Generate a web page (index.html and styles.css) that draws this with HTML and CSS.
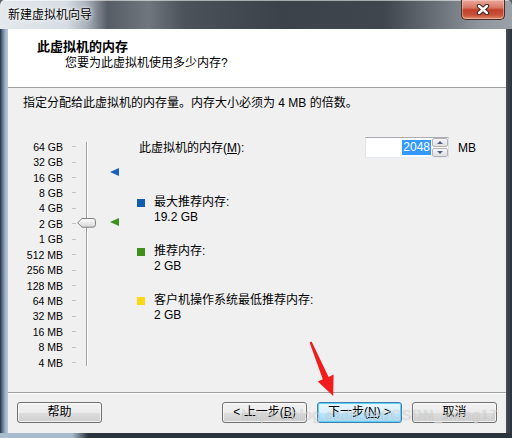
FILE: index.html
```html
<!DOCTYPE html>
<html lang="zh-CN">
<head>
<meta charset="utf-8">
<title>新建虚拟机向导</title>
<link rel="stylesheet" href="styles.css">
</head>
<body>
<div class="window">
  <div class="titlebar">
    <span class="title">新建虚拟机向导</span>
    <div class="close">
      <svg width="14" height="11" viewBox="0 0 14 11">
        <path d="M3 2 L11 9 M11 2 L3 9" stroke="#3a2420" stroke-width="4.4" stroke-linecap="round"/>
        <path d="M3 2 L11 9 M11 2 L3 9" stroke="#ffffff" stroke-width="2.4" stroke-linecap="round"/>
      </svg>
    </div>
  </div>
  <div class="client">
    <div class="header">
      <div class="h-title">此虚拟机的内存</div>
      <div class="h-sub">您要为此虚拟机使用多少内存?</div>
    </div>
    <div class="content">
      <p class="intro">指定分配给此虚拟机的内存量。内存大小必须为 4 MB 的倍数。</p>
      <div class="main">
        <div class="scale">
          <ul class="ticks">
            <li class="row"><span class="lbl">64 GB</span><i class="tick"></i></li>
            <li class="row"><span class="lbl">32 GB</span><i class="tick"></i></li>
            <li class="row"><span class="lbl">16 GB</span><i class="tick"></i></li>
            <li class="row"><span class="lbl">8 GB</span><i class="tick"></i></li>
            <li class="row"><span class="lbl">4 GB</span><i class="tick"></i></li>
            <li class="row"><span class="lbl">2 GB</span><i class="tick"></i></li>
            <li class="row"><span class="lbl">1 GB</span><i class="tick"></i></li>
            <li class="row"><span class="lbl">512 MB</span><i class="tick"></i></li>
            <li class="row"><span class="lbl">256 MB</span><i class="tick"></i></li>
            <li class="row"><span class="lbl">128 MB</span><i class="tick"></i></li>
            <li class="row"><span class="lbl">64 MB</span><i class="tick"></i></li>
            <li class="row"><span class="lbl">32 MB</span><i class="tick"></i></li>
            <li class="row"><span class="lbl">16 MB</span><i class="tick"></i></li>
            <li class="row"><span class="lbl">8 MB</span><i class="tick"></i></li>
            <li class="row"><span class="lbl">4 MB</span><i class="tick"></i></li>
          </ul>
          <div class="track"></div>
          <svg class="thumb" width="19" height="10" viewBox="0 0 19 10">
            <defs>
              <linearGradient id="tg" x1="0" y1="0" x2="0" y2="1">
                <stop offset="0" stop-color="#ffffff"/>
                <stop offset="1" stop-color="#d6d6d6"/>
              </linearGradient>
            </defs>
            <path d="M0.6 4.8 L5 0.5 H16 Q18.4 0.5 18.4 2.8 V6.8 Q18.4 9.2 16 9.2 H5 Z" fill="url(#tg)" stroke="#808080" stroke-width="1"/>
          </svg>
          <i class="marker marker-max"></i>
          <i class="marker marker-rec"></i>
        </div>
        <div class="details">
          <div class="memrow">
            <span class="memlabel">此虚拟机的内存(<u>M</u>):</span>
            <div class="spin">
              <div class="spin-val"><span class="sel">2048</span></div>
              <div class="spin-btns">
                <span class="sb"><i class="arr-up"></i></span>
                <span class="sb"><i class="arr-down"></i></span>
              </div>
            </div>
            <span class="unit">MB</span>
          </div>
          <div class="legend">
            <div class="item"><i class="sq sq-max"></i><div><div>最大推荐内存:</div><div>19.2 GB</div></div></div>
            <div class="item"><i class="sq sq-rec"></i><div><div>推荐内存:</div><div>2 GB</div></div></div>
            <div class="item"><i class="sq sq-min"></i><div><div>客户机操作系统最低推荐内存:</div><div>2 GB</div></div></div>
          </div>
        </div>
      </div>
    </div>
    <div class="footer">
      <button class="btn btn-help">帮助</button>
      <button class="btn">&lt; 上一步(<u>B</u>)</button>
      <button class="btn btn-default">下一步(<u>N</u>) &gt;</button>
      <button class="btn">取消</button>
    </div>
  </div>
  <svg class="arrow" width="512" height="438" viewBox="0 0 512 438">
    <polygon points="311.6,341.4 328.6,376.9 333.6,374.6 333.2,396 317.8,381.4 322.8,379.2 309.6,342.4" fill="#f21c1c"/>
  </svg>
  <div class="watermark">https://blog.csdn.net/CSDN_xiang17</div>
</div>
</body>
</html>
```
FILE: styles.css
```css
html, body {
  margin: 0;
  padding: 0;
}
body {
  width: 512px;
  height: 438px;
  overflow: hidden;
  background: #5a6068;
  font-family: "Liberation Sans", "Noto Sans CJK SC", sans-serif;
  font-size: 12px;
  color: #000;
}
.window {
  position: relative;
  width: 512px;
  height: 438px;
  display: flex;
  flex-direction: column;
  border-radius: 5px 5px 0 0;
  overflow: hidden;
  background:
    linear-gradient(to right, #a9bccf 0, #a9bccf 72px, #2b333d 88px, #2b333d 100%) bottom / 100% 5px no-repeat,
    linear-gradient(to right, #27313d 0, #566a82 2px, #98aec6 5px, #b9cbdd 8px, #7c8894 40%, #4a525c 505px, #2a323c 512px);
}
.titlebar {
  height: 29px;
  flex: none;
  display: flex;
  justify-content: space-between;
  align-items: flex-start;
  background: linear-gradient(to right, #e4e9ee 0%, #d6dce3 13%, #a7afb8 17%, #565d66 21%, #6f767d 29%, #4b525a 36%, #3b424a 55%, #3f464e 75%, #6c737a 86%, #8f969d 94%, #9aa1a8 100%);
  box-shadow: inset 0 1px rgba(255,255,255,0.55);
}
.title {
  padding: 7px 0 0 8px;
  line-height: 16px;
  color: #000;
  text-shadow: 0 0 6px #fff, 0 0 3px #fff;
}
.close {
  width: 44px;
  height: 20px;
  margin-right: 7px;
  box-sizing: border-box;
  border: 1px solid #4a2a24;
  border-top: none;
  border-radius: 0 0 5px 5px;
  background: linear-gradient(#e9a99d 0%, #d77763 40%, #c2412a 52%, #c8523a 80%, #e0906e 100%);
  box-shadow: inset 0 0 0 1px rgba(255,220,210,0.45);
  display: flex;
  align-items: center;
  justify-content: center;
}
.client {
  flex: 1;
  margin: 0 6px 5px 8px;
  background: #f0f0f0;
  display: flex;
  flex-direction: column;
}
.header {
  height: 59px;
  box-sizing: border-box;
  flex: none;
  background: #fff;
  border-bottom: 1px solid #a0a0a0;
  padding: 10px 0 0 29px;
}
.h-title {
  font-weight: bold;
  font-size: 13px;
  line-height: 16px;
}
.h-sub {
  padding-left: 28px;
  line-height: 16px;
}
.content {
  flex: 1;
}
.intro {
  margin: 0;
  padding: 7px 0 0 15px;
  line-height: 16px;
}
.main {
  display: flex;
  align-items: flex-start;
}
.scale {
  position: relative;
  width: 129px;
  flex: none;
  box-sizing: border-box;
  display: flex;
  padding-top: 28px;
}
.ticks {
  list-style: none;
  margin: 0;
  padding: 0;
}
.row {
  display: flex;
  align-items: center;
  height: 15.43px;
}
.lbl {
  width: 55px;
  text-align: right;
  font-size: 10.5px;
  line-height: 12px;
  color: #000;
}
.tick {
  width: 4px;
  height: 1px;
  margin-left: 9px;
  background: #c4c4c4;
}
.track {
  width: 0;
  border-left: 1px solid #a0a0a0;
  border-right: 1px solid #fff;
  margin: 3px 0 4px 10px;
}
.thumb {
  position: absolute;
  left: 69px;
  top: 107px;
}
.marker {
  position: absolute;
  left: 102px;
  width: 0;
  height: 0;
  border-top: 4.5px solid transparent;
  border-bottom: 4.5px solid transparent;
  border-right: 9px solid #1a62b8;
}
.marker-max {
  top: 57px;
}
.marker-rec {
  top: 107px;
  border-right-color: #3f8f1f;
}
.details {
  flex: 1;
  padding-top: 26px;
}
.memrow {
  display: flex;
  align-items: center;
  height: 21px;
  padding-left: 2px;
}
.memlabel {
  width: 226px;
  line-height: 16px;
}
.spin {
  display: flex;
  width: 84px;
  height: 21px;
  box-sizing: border-box;
  border: 1px solid;
  border-color: #abadb3 #dbdfe6 #e3e9ef #e2e3ea;
  background: #fff;
}
.spin-val {
  flex: 1;
  text-align: right;
  padding: 2px 1px 0 0;
}
.sel {
  display: inline-block;
  background: #3399ff;
  color: #fff;
  line-height: 15px;
  padding: 0 1px;
}
.spin-btns {
  width: 16px;
  display: flex;
  flex-direction: column;
  gap: 1px;
}
.sb {
  flex: 1;
  box-sizing: border-box;
  border: 1px solid #b3b3b3;
  border-radius: 2px;
  background: linear-gradient(#f7f7f7, #dfdfdf);
  display: flex;
  align-items: center;
  justify-content: center;
}
.arr-up {
  width: 0;
  height: 0;
  border-left: 3px solid transparent;
  border-right: 3px solid transparent;
  border-bottom: 3px solid #4d6185;
}
.arr-down {
  width: 0;
  height: 0;
  border-left: 3px solid transparent;
  border-right: 3px solid transparent;
  border-top: 3px solid #4d6185;
}
.unit {
  margin-left: 9px;
  line-height: 16px;
}
.legend {
  margin-top: 37px;
  display: flex;
  flex-direction: column;
  gap: 19px;
}
.item {
  display: flex;
  line-height: 15px;
}
.sq {
  flex: none;
  width: 8px;
  height: 8px;
  margin: 4px 9px 0 0;
}
.sq-max { background: #0f5eae; }
.sq-rec { background: #3f8f1a; }
.sq-min { background: #fcd713; }
.footer {
  flex: none;
  display: flex;
  gap: 10px;
  border-top: 1px solid #a0a0a0;
  box-shadow: inset 0 1px #fff;
  padding: 9px 9px 10px 9px;
}
.btn {
  width: 85px;
  height: 21px;
  box-sizing: border-box;
  padding: 0;
  border: 1px solid #707070;
  border-radius: 3px;
  background: linear-gradient(#f2f2f2 0%, #ebebeb 50%, #dddddd 51%, #cfcfcf 100%);
  box-shadow: inset 0 0 0 1px rgba(255,255,255,0.7);
  font: inherit;
  line-height: 19px;
  text-align: center;
  color: #000;
}
.btn-help {
  margin-right: auto;
}
.btn-default {
  border-color: #3c7fb1;
  background: linear-gradient(#eaf6fd 0%, #d9f0fc 50%, #bee6fd 51%, #a7d9f5 100%);
  box-shadow: inset 0 0 0 1px #5fd2f8;
}
.arrow {
  position: absolute;
  left: 0;
  top: 0;
  pointer-events: none;
}
.watermark {
  position: absolute;
  left: 242px;
  top: 406px;
  font-family: "Liberation Sans", sans-serif;
  font-size: 14px;
  letter-spacing: 0.9px;
  line-height: 18px;
  color: rgba(255,255,255,0.6);
  text-shadow: 0 0 1px rgba(0,0,0,0.3);
  white-space: nowrap;
  pointer-events: none;
}
```
